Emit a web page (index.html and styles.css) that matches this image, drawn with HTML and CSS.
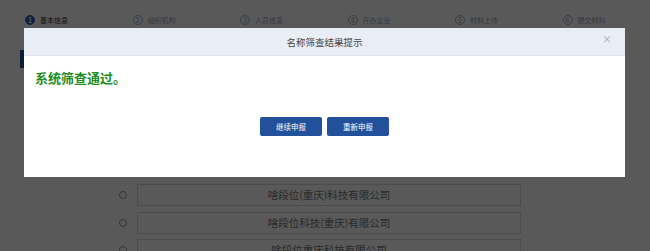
FILE: index.html
```html
<!DOCTYPE html>
<html lang="zh-CN">
<head>
	<meta charset="UTF-8">
	<meta name="viewport" content="width=device-width, initial-scale=1.0">
	<title>名称筛查</title>
	<link rel="stylesheet" href="styles.css">
</head>
<body>
	<div class="page">
		<!-- 步骤条 -->
		<ul class="steps">
			<li class="step active"><span class="num">1</span>基本信息</li>
			<li class="step"><span class="num">2</span>组织机构</li>
			<li class="step"><span class="num">3</span>人员信息</li>
			<li class="step"><span class="num">4</span>开办企业</li>
			<li class="step"><span class="num">5</span>材料上传</li>
			<li class="step"><span class="num">6</span>提交材料</li>
		</ul>

		<div class="section-tag">名称选择</div>

		<!-- 备选名称 -->
		<div class="names">
			<label class="name-row"><span class="radio"></span><span class="name-box">啥段位(重庆)科技有限公司</span></label>
			<label class="name-row"><span class="radio"></span><span class="name-box">啥段位科技(重庆)有限公司</span></label>
			<label class="name-row"><span class="radio"></span><span class="name-box">啥段位重庆科技有限公司</span></label>
		</div>
	</div>

	<div class="mask"></div>

	<div class="modal">
		<div class="modal-header">
			名称筛查结果提示
			<span class="close">×</span>
		</div>
		<div class="modal-body">
			<p class="result">系统筛查通过。</p>
			<div class="actions">
				<button class="button">继续申报</button>
				<button class="button">重新申报</button>
			</div>
		</div>
	</div>
</body>
</html>
```

FILE: styles.css
```css
body {
	font-family: "Noto Sans CJK SC", "Noto Sans", sans-serif;
	margin: 0;
	padding: 0;
	background-color: #fff;
	overflow: hidden;
}
.page {
	padding-top: 15px;
}
.steps {
	list-style: none;
	margin: 0;
	padding: 0 0 0 25px;
	display: flex;
	height: 10px;
}
.step {
	width: 107.5px;
	flex: none;
	display: flex;
	align-items: center;
	font-size: 7px;
	color: #98a4bc;
}
.step .num {
	width: 8px;
	height: 8px;
	border: 1px solid #a3b3d3;
	border-radius: 50%;
	margin-right: 5px;
	font-size: 7px;
	line-height: 8px;
	text-align: center;
	color: #8da3cc;
}
.step.active {
	color: #333;
}
.step.active .num {
	background-color: #2a5fbf;
	border-color: #2a5fbf;
	color: #fff;
	font-weight: bold;
}
.section-tag {
	margin: 25px 0 0 20px;
	width: 70px;
	height: 18px;
	background-color: #23509b;
	color: #fff;
	font-size: 9px;
	line-height: 18px;
	text-align: center;
}
.names {
	margin-top: 116px;
}
.name-row {
	display: flex;
	align-items: center;
	margin-bottom: 5.5px;
}
.radio {
	width: 8px;
	height: 8px;
	box-sizing: border-box;
	border: 1px solid #999;
	border-radius: 50%;
	margin-left: 119px;
}
.name-box {
	margin-left: 10px;
	width: 384px;
	height: 22px;
	box-sizing: border-box;
	border: 1px solid #d9d9d9;
	font-size: 10.5px;
	line-height: 20px;
	text-align: center;
	color: #777;
}
.mask {
	position: fixed;
	top: 0;
	left: 0;
	right: 0;
	bottom: 0;
	background-color: rgba(0, 0, 0, 0.65);
}
.modal {
	position: fixed;
	top: 28px;
	left: 24px;
	width: 601px;
	height: 149px;
	background-color: #fff;
}
.modal-header {
	position: relative;
	height: 28px;
	box-sizing: border-box;
	background-color: #e9edf5;
	border-bottom: 1px solid #dde2ec;
	font-size: 9.5px;
	line-height: 28px;
	text-align: center;
	color: #444;
}
.close {
	position: absolute;
	right: 13px;
	top: 0;
	line-height: 22px;
	font-size: 10px;
	color: #aaa;
}
.modal-body {
	padding: 14px 11px 0;
}
.result {
	margin: 0;
	font-size: 13px;
	line-height: 15px;
	font-weight: bold;
	color: #1e8c1e;
}
.actions {
	display: flex;
	justify-content: center;
	gap: 5px;
	margin-top: 32px;
	padding-left: 0;
}
.button {
	width: 62px;
	height: 19px;
	padding: 0;
	border: none;
	border-radius: 2px;
	background-color: #23509b;
	color: #fff;
	font-family: inherit;
	font-size: 7.5px;
	line-height: 19px;
	cursor: pointer;
}
```
